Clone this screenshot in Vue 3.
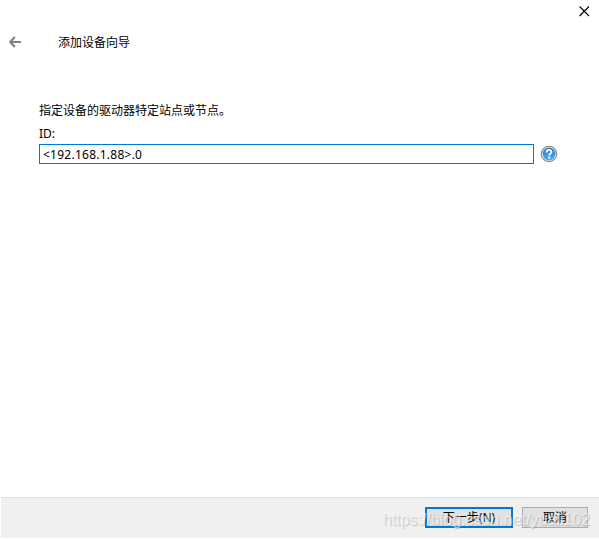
<script setup>
import { ref } from "vue";

const deviceId = ref("<192.168.1.88>.0");
</script>

<template>
    <div class="wizard">
        <div class="titlebar">
            <button class="close" type="button" aria-label="Close">
                <svg width="11" height="11" viewBox="0 0 11 11">
                    <path d="M.5 .5l9.5 9.5M10 .5L.5 10" stroke="#000" stroke-width="1.1" />
                </svg>
            </button>
        </div>
        <header class="header">
            <svg class="back" width="13" height="12" viewBox="0 0 13 12">
                <path d="M12 6H1.2M5.9 1L1.2 6l4.7 5" fill="none" stroke="#808080" stroke-width="2" />
            </svg>
            <h1>添加设备向导</h1>
        </header>
        <main class="content">
            <p>指定设备的驱动器特定站点或节点。</p>
            <label for="device-id">ID:</label>
            <div class="field">
                <input id="device-id" v-model="deviceId" type="text" spellcheck="false" />
                <svg width="18" height="18" viewBox="0 0 18 18">
                    <defs>
                        <linearGradient id="help-fill" x1="0" y1="0" x2="0" y2="1">
                            <stop offset="0" stop-color="#2878cc" />
                            <stop offset="1" stop-color="#55acee" />
                        </linearGradient>
                    </defs>
                    <circle cx="9" cy="9" r="7.7" fill="#eee" stroke="#858585" stroke-width="1.1" />
                    <circle cx="9" cy="9" r="6.4" fill="url(#help-fill)" />
                    <path d="M6.6 7.4c0-3.2 4.9-3.2 4.9-.4 0 1.6-2.3 1.7-2.3 3.5" fill="none" stroke="#fff" stroke-width="1.8" />
                    <path d="M8.2 11.6h2v2h-2z" fill="#fff" />
                </svg>
            </div>
        </main>
        <footer class="footer">
            <button class="btn primary" type="button">下一步(N)</button>
            <button class="btn" type="button">取消</button>
            <span class="watermark">https://blog.csdn.net/yuali102</span>
        </footer>
    </div>
</template>

<style>
body {
    background: #fff;
}
</style>

<style scoped>
.wizard {
    display: flex;
    flex-direction: column;
    box-sizing: border-box;
    height: 539px;
    padding: 0 0 1px 1px;
    color: #000;
    font: 12px/18px "Noto Sans", "Noto Sans CJK SC", sans-serif;
}

.titlebar {
    display: flex;
    justify-content: flex-end;
    height: 33px;
}

.close {
    display: flex;
    width: 20px;
    height: 22px;
    padding: 6px 0 0 0;
    border: 0;
    background: none;
}

.header {
    display: flex;
    align-items: center;
    height: 18px;
    padding-left: 8px;
}

.header h1 {
    margin: 2px 0 0 36px;
    font-size: 12px;
    font-weight: 400;
}

.content {
    display: flex;
    flex: 1;
    flex-direction: column;
    padding: 51px 41px 0 38px;
}

.content p {
    margin: 0 0 5px;
}

.content label {
    height: 19px;
}

.field {
    display: flex;
    align-items: center;
    gap: 6px;
}

.field input {
    box-sizing: border-box;
    width: 495px;
    height: 20px;
    padding: 0 3px;
    border: 1px solid #0078d7;
    outline: 0;
    color: #000;
    font: inherit;
    letter-spacing: 0.25px;
}

.footer {
    position: relative;
    display: flex;
    justify-content: flex-end;
    gap: 9px;
    box-sizing: border-box;
    height: 41px;
    padding: 9px 11px 0 0;
    border-top: 1px solid #dfdfdf;
    background: #f0f0f0;
}

.btn {
    box-sizing: border-box;
    width: 66px;
    height: 21px;
    padding: 0;
    border: 1px solid #adadad;
    background: #e1e1e1;
    color: #000;
    font: inherit;
    line-height: 17px;
}

.btn.primary {
    width: 88px;
    border: 2px solid #0078d7;
}

.watermark {
    position: absolute;
    top: 12px;
    right: 9px;
    color: rgba(255, 255, 255, 0.55);
    font: 16px/20px "Liberation Sans", sans-serif;
    text-shadow: 1px 1px 1px rgba(140, 140, 140, 0.45);
    white-space: nowrap;
    pointer-events: none;
}
</style>
